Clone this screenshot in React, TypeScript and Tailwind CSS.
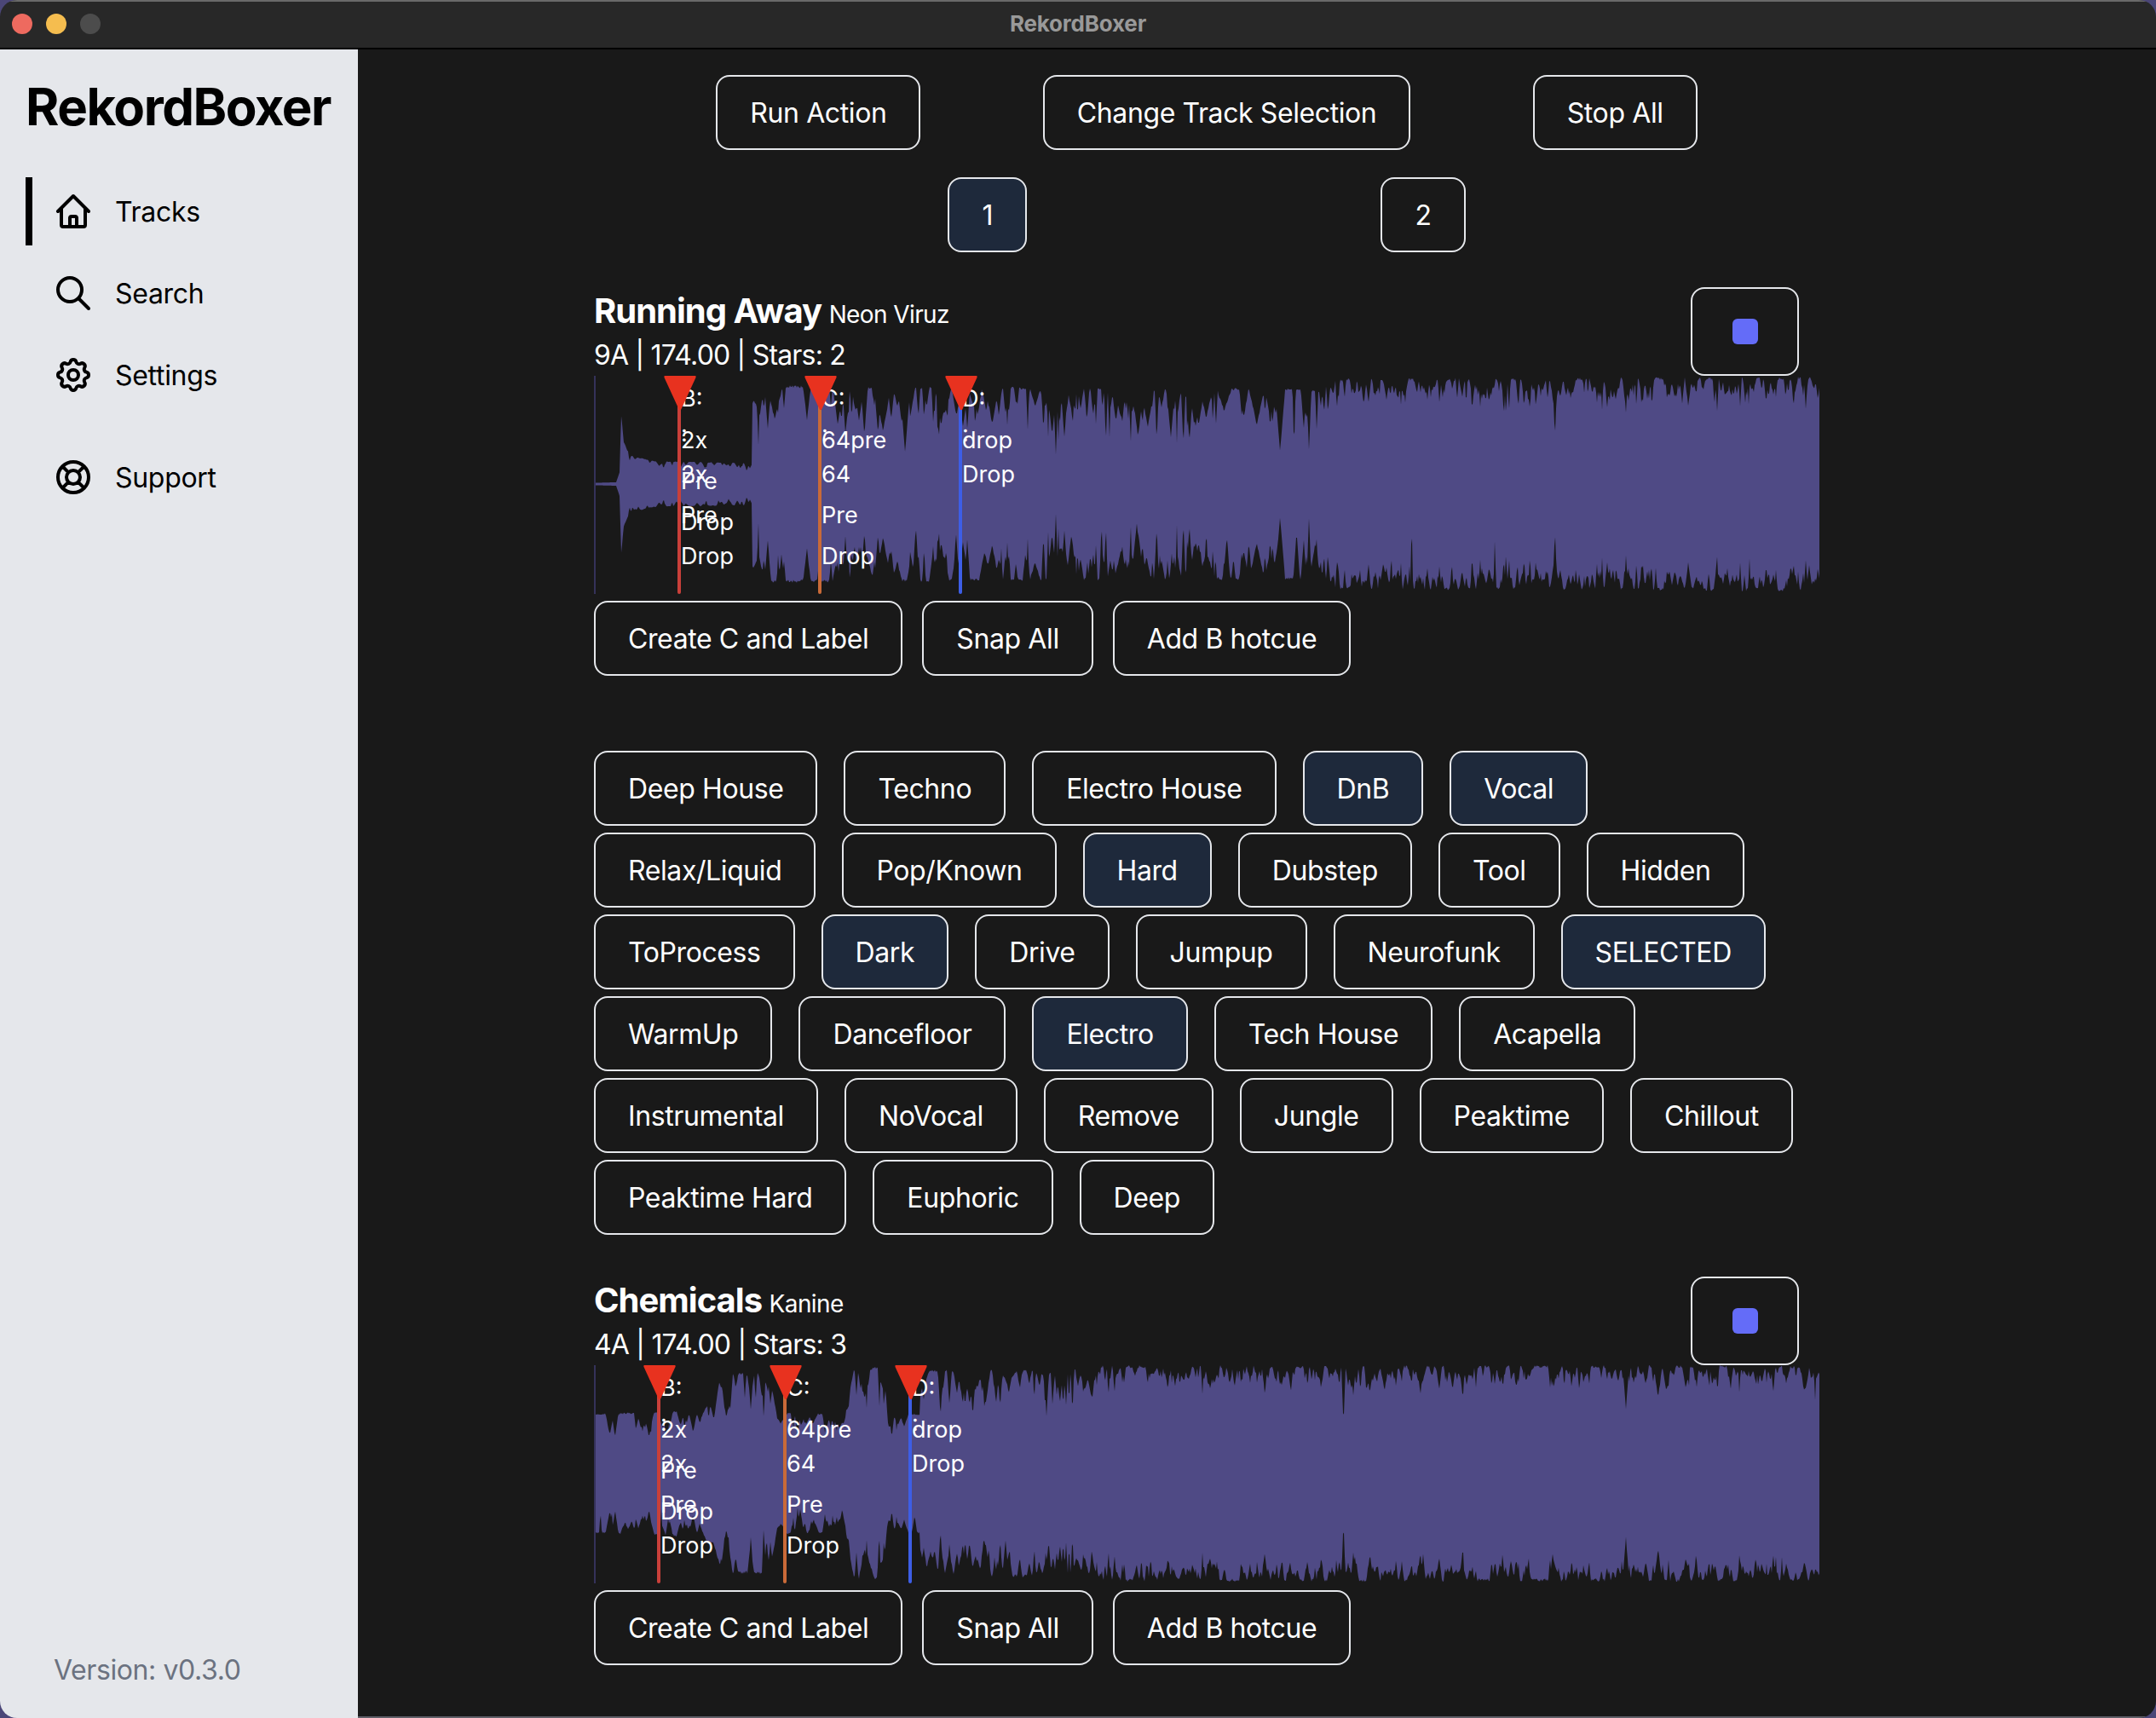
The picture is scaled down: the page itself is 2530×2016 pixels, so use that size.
import React from "react";
import { HiOutlineHome, HiOutlineSearch, HiOutlineCog, HiOutlineSupport } from "react-icons/hi";

const WAVE_W = 1438;
const WAVE_H = 256;

type Dips = { from: number; to: number; density: number; depth: number; wide: number };

function rng(seed: number) {
    return () => {
        seed = (seed + 0x6d2b79f5) | 0;
        let t = Math.imul(seed ^ (seed >>> 15), 1 | seed);
        t = (t + Math.imul(t ^ (t >>> 7), 61 | t)) ^ t;
        return ((t ^ (t >>> 14)) >>> 0) / 4294967296;
    };
}

function lerp(pts: number[][], x: number) {
    for (let i = 1; i < pts.length; i++) {
        if (x <= pts[i][0]) {
            const [x0, y0] = pts[i - 1];
            const [x1, y1] = pts[i];
            return y0 + ((y1 - y0) * (x - x0)) / (x1 - x0 || 1);
        }
    }
    return pts[pts.length - 1][1];
}

// fake peaks: envelope minus a lot of sharp dips
function buildWave(seed: number, env: number[][], dips: Dips[]) {
    const r = rng(seed);
    const cut = new Array(WAVE_W + 1).fill(0);
    const cutB = new Array(WAVE_W + 1).fill(0);
    for (const d of dips) {
        const count = Math.round((d.to - d.from) * d.density);
        for (let i = 0; i < count; i++) {
            const pos = d.from + r() * (d.to - d.from);
            const w = 1.5 + r() * r() * d.wide;
            const depth = d.depth * (0.25 + 0.75 * r() * r());
            const both = r() < 0.6;
            const top = both || r() < 0.5;
            for (let x = Math.floor(pos - w); x <= Math.ceil(pos + w); x++) {
                if (x < 0 || x > WAVE_W) continue;
                const v = depth * Math.max(0, 1 - Math.abs(x - pos) / w);
                if (both || top) cut[x] = Math.max(cut[x], v);
                if (both || !top) cutB[x] = Math.max(cutB[x], v);
            }
        }
    }
    const c = WAVE_H / 2 - 1;
    let up = "";
    let down = "";
    for (let x = 0; x <= WAVE_W; x++) {
        const a = lerp(env, x);
        const yt = c - a * (1 - cut[x]) * (0.97 + 0.03 * r());
        const yb = c + a * (1 - cutB[x]) * (0.97 + 0.03 * r());
        up += `${x === 0 ? "M" : "L"}${x} ${yt.toFixed(1)}`;
        down = `L${x} ${yb.toFixed(1)}` + down;
    }
    return up + down + "Z";
}

const wave1 = buildWave(
    7,
    [[0, 1.5], [26, 2], [30, 14], [32, 82], [35, 50], [42, 34], [70, 27], [120, 26], [185, 25], [186, 100], [200, 116], [852, 112], [856, 124], [1438, 126]],
    [
        { from: 40, to: 185, density: 0.3, depth: 0.4, wide: 3 },
        { from: 190, to: 852, density: 0.3, depth: 0.72, wide: 9 },
        { from: 640, to: 740, density: 0.2, depth: 0.8, wide: 8 },
        { from: 852, to: 1438, density: 0.5, depth: 0.36, wide: 4 },
        { from: 852, to: 1438, density: 0.025, depth: 0.75, wide: 2 },
    ],
);

const wave2 = buildWave(
    21,
    [[0, 70], [100, 74], [140, 82], [150, 118], [205, 118], [215, 72], [295, 70], [305, 125], [340, 125], [345, 70], [380, 70], [385, 122], [590, 122], [592, 127], [1438, 127]],
    [
        { from: 0, to: 590, density: 0.35, depth: 0.55, wide: 8 },
        { from: 590, to: 1438, density: 0.42, depth: 0.3, wide: 4 },
        { from: 590, to: 1438, density: 0.015, depth: 0.65, wide: 3 },
    ],
);

const MARKERS = [
    { letter: "B:", color: "bg-[#c9403a]", notes: [["2x", 60], ["2x", 100], ["Pre", 108], ["Pre", 148], ["Drop", 156], ["Drop", 196]] },
    { letter: "C:", color: "bg-[#c96a38]", notes: [["64pre", 60], ["64", 100], ["Pre", 148], ["Drop", 196]] },
    { letter: "D:", color: "bg-[#3d5ee6]", notes: [["drop", 60], ["Drop", 100]] },
];

const GENRES = [
    "Deep House", "Techno", "Electro House", "DnB", "Vocal",
    "Relax/Liquid", "Pop/Known", "Hard", "Dubstep", "Tool", "Hidden",
    "ToProcess", "Dark", "Drive", "Jumpup", "Neurofunk", "SELECTED",
    "WarmUp", "Dancefloor", "Electro", "Tech House", "Acapella",
    "Instrumental", "NoVocal", "Remove", "Jungle", "Peaktime", "Chillout",
    "Peaktime Hard", "Euphoric", "Deep",
];
const ACTIVE = ["DnB", "Vocal", "Hard", "Dark", "SELECTED", "Electro"];

function Btn({ label, active, className }: { label: string; active?: boolean; className?: string }) {
    return (
        <button
            className={`h-[88px] rounded-[16px] border-2 border-[#e5e7eb] px-[38px] pt-[2px] text-[32px] leading-[44px] tracking-[-0.4px] whitespace-nowrap text-white ${
                active ? "bg-[#1e293b]" : "bg-transparent"
            } ${className ?? ""}`}
        >
            {label}
        </button>
    );
}

function Marker({ left, marker }: { left: number; marker: (typeof MARKERS)[number] }) {
    return (
        <div className="absolute top-0 h-full w-0" style={{ left }}>
            <div className={`absolute top-0 left-[-2px] h-full w-[4px] rounded-b-full ${marker.color}`} />
            <span className="absolute top-[11px] left-[2px] text-[27px] leading-[32px] text-white">{marker.letter}</span>
            <span className="absolute top-[52px] left-[2px] text-[27px] leading-[32px] text-white">:</span>
            {marker.notes.map(([text, top]) => (
                <span key={`${text}${top}`} className="absolute left-[2px] text-[27px] leading-[32px] text-white" style={{ top: top as number }}>
                    {text}
                </span>
            ))}
            {/* the flag sits on top of the label */}
            <svg className="absolute top-0 left-[-18px]" width="38" height="40" viewBox="0 0 38 40">
                <path d="M1 0 H37 Q38 0 37.5 2 L20 40 H18 L0.5 2 Q0 0 1 0Z" fill="#e8321f" />
            </svg>
        </div>
    );
}

function Track({ title, artist, meta, wave, marks }: { title: string; artist: string; meta: string; wave: string; marks: number[] }) {
    return (
        <div>
            <div className="flex justify-between">
                <div>
                    <p className="text-[40px] leading-[56px] font-bold tracking-[-1px] text-white">
                        {title} <span className="text-[28px] leading-none font-normal tracking-[-0.6px]">{artist}</span>
                    </p>
                    <p className="text-[32px] leading-[48px] tracking-[-0.8px] text-white">{meta}</p>
                </div>
                <button className="mr-[24px] flex h-[104px] w-[127px] items-center justify-center rounded-[16px] border-2 border-[#e5e7eb]">
                    <span className="h-[30px] w-[30px] rounded-[6px] bg-[#646cf8]" />
                </button>
            </div>
            <div className="relative h-[256px] overflow-hidden">
                <svg className="h-full w-full" viewBox={`0 0 ${WAVE_W} ${WAVE_H}`}>
                    <path d={wave} fill="#4f4a85" />
                </svg>
                <div className="absolute top-0 left-0 h-full w-[2px] bg-[#35325a]" />
                {MARKERS.map((m, i) => (
                    <Marker key={m.letter} left={marks[i]} marker={m} />
                ))}
            </div>
            <div className="mt-[8px] flex gap-[23px]">
                <Btn label="Create C and Label" />
                <Btn label="Snap All" />
                <Btn label="Add B hotcue" />
            </div>
        </div>
    );
}

function NavItem({ icon, label, active, className }: { icon: React.ReactNode; label: string; active?: boolean; className?: string }) {
    return (
        <div className={`flex h-[80px] items-center gap-[25px] border-l-8 pl-[24px] ${active ? "border-black" : "border-transparent"} ${className ?? ""}`}>
            {icon}
            <span className="pt-[2px] text-[32px] tracking-[-0.3px] text-black">{label}</span>
        </div>
    );
}

export default function App() {
    return (
        <div className="h-[2016px] w-[2530px] overflow-hidden bg-[#4b4678] font-['Inter',sans-serif]">
            <div className="flex h-[2016px] flex-col overflow-hidden rounded-[20px]">
                {/* Title bar */}
                <div className="relative flex h-[58px] shrink-0 items-center justify-center border-t-2 border-b-2 border-t-[#6a6a6a] border-b-black bg-[#282828] pb-[2px]">
                    <div className="absolute left-[14px] flex gap-[16px]">
                        <span className="h-[24px] w-[24px] rounded-full bg-[#ee6a5f]" />
                        <span className="h-[24px] w-[24px] rounded-full bg-[#f5bd4f]" />
                        <span className="h-[24px] w-[24px] rounded-full bg-[#4c4c4c]" />
                    </div>
                    <span className="mb-[2px] text-[26px] font-bold tracking-[-0.2px] text-[#999999]">RekordBoxer</span>
                </div>

                <div className="flex min-h-0 flex-1">
                    {/* Sidebar */}
                    <aside className="flex w-[420px] shrink-0 flex-col bg-[#e5e7eb] pl-[30px]">
                        <h1 className="mt-[27px] mb-[43px] text-[60px] leading-[80px] font-bold tracking-[-1.5px] whitespace-nowrap text-black">RekordBoxer</h1>
                        <nav className="flex flex-col gap-[16px]">
                            <NavItem active label="Tracks" icon={<HiOutlineHome className="h-[48px] w-[48px] text-black" />} />
                            <NavItem label="Search" icon={<HiOutlineSearch className="h-[48px] w-[48px] text-black" />} />
                            <NavItem label="Settings" icon={<HiOutlineCog className="h-[48px] w-[48px] text-black" />} />
                            <NavItem label="Support" className="mt-[24px]" icon={<HiOutlineSupport className="h-[48px] w-[48px] text-black" />} />
                        </nav>
                        <p className="mt-auto mb-[32px] pl-[33px] text-[32px] leading-[48px] tracking-[-0.4px] text-[#6b7280]">Version: v0.3.0</p>
                    </aside>

                    {/* Main */}
                    <main className="flex-1 border-b-2 border-[#5f5f68] bg-[#191919] pt-[30px] pl-[277px]">
                        <div className="w-[1438px]">
                            <div className="flex justify-evenly">
                                <Btn label="Run Action" />
                                <Btn label="Change Track Selection" />
                                <Btn label="Stop All" />
                            </div>
                            <div className="mt-[32px] flex justify-evenly">
                                <Btn label="1" active />
                                <Btn label="2" />
                            </div>
                            <div className="mt-[41px]">
                                <Track
                                    title="Running Away"
                                    artist="Neon Viruz"
                                    meta="9A | 174.00 | Stars: 2"
                                    wave={wave1}
                                    marks={[100, 265, 430]}
                                />
                            </div>
                            <div className="mt-[88px] flex flex-wrap gap-x-[31px] gap-y-[8px]">
                                {GENRES.map((g) => (
                                    <Btn key={g} label={g} active={ACTIVE.includes(g)} />
                                ))}
                            </div>
                            <div className="mt-[49px]">
                                <Track title="Chemicals" artist="Kanine" meta="4A | 174.00 | Stars: 3" wave={wave2} marks={[76, 224, 371]} />
                            </div>
                        </div>
                    </main>
                </div>
            </div>
        </div>
    );
}
